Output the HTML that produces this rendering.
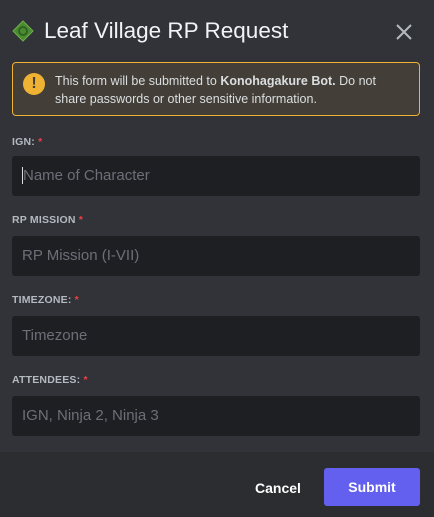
<!DOCTYPE html>
<html><head><style>
*{margin:0;padding:0;box-sizing:border-box}
body{width:434px;height:517px;background:#313338;font-family:"Liberation Sans",sans-serif;position:relative;overflow:hidden}
.title{position:absolute;left:44px;top:18px;font-size:22.5px;color:#f2f3f5}
.close{position:absolute;left:394px;top:22px}
.warn{position:absolute;left:12px;top:62px;width:408px;height:54px;border:1px solid #f0b232;border-radius:4px;background:#433f38}
.warn .ic{position:absolute;left:10px;top:10px;width:22px;height:22px;border-radius:50%;background:#f0b232;color:#433f38;font-weight:bold;font-size:16px;text-align:center;line-height:22px}
.warn p{position:absolute;left:42px;top:9px;font-size:12.5px;line-height:18px;color:#dbdee1;width:345px}
.lbl{position:absolute;left:12px;font-size:10.5px;font-weight:bold;color:#b5bac1;letter-spacing:.2px}
.lbl span{color:#f23f43}
.inp{position:absolute;left:12px;width:408px;height:40px;background:#1e1f22;border-radius:3px;color:#6d6f78;font-size:15px;line-height:40px;padding-left:10px}
.foot{position:absolute;left:0;top:452px;width:434px;height:65px;background:#2b2d31}
.cancel{position:absolute;left:255px;top:480px;color:#fff;font-size:14px;font-weight:bold}
.submit{position:absolute;left:324px;top:468px;width:96px;height:38px;border-radius:3px;background:#6360f0;color:#fff;font-size:14px;font-weight:bold;text-align:center;line-height:38px}
</style></head><body>
<svg style="position:absolute;left:12px;top:20px" width="22" height="22" viewBox="0 0 22 22"><polygon points="11,1 21,11 11,21 1,11" fill="#4a8a30" stroke="#6fb048"/><circle cx="11" cy="11" r="4" fill="none" stroke="#2a5a1c" stroke-width="1.5"/></svg>
<div class="title">Leaf Village RP Request</div>
<svg class="close" width="20" height="20" viewBox="0 0 20 20"><path d="M3 3L17 17M17 3L3 17" stroke="#b5bac1" stroke-width="2"/></svg>
<div class="warn"><div class="ic">!</div><p>This form will be submitted to <b>Konohagakure Bot.</b> Do not share passwords or other sensitive information.</p></div>
<div class="lbl" style="top:136px">IGN: <span>*</span></div>
<div class="inp" style="top:156px"><span style="border-left:1px solid #ddd"></span>Name of Character</div>
<div class="lbl" style="top:214px">RP MISSION <span>*</span></div>
<div class="inp" style="top:236px">RP Mission (I-VII)</div>
<div class="lbl" style="top:294px">TIMEZONE: <span>*</span></div>
<div class="inp" style="top:316px">Timezone</div>
<div class="lbl" style="top:374px">ATTENDEES: <span>*</span></div>
<div class="inp" style="top:396px">IGN, Ninja 2, Ninja 3</div>
<div class="foot"></div>
<div class="cancel">Cancel</div>
<div class="submit">Submit</div>
</body></html>
